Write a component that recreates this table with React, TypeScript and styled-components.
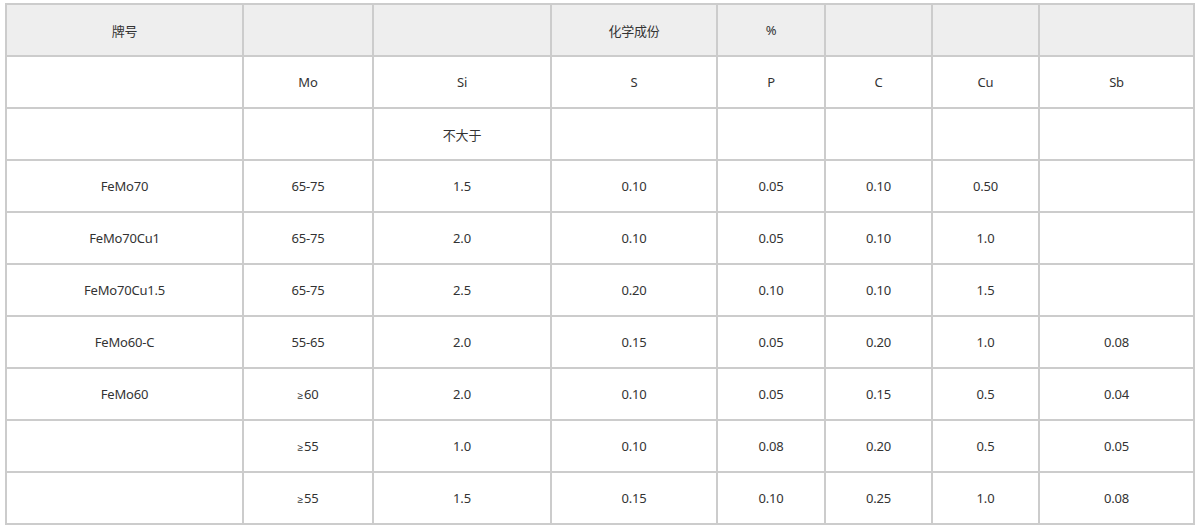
import styled, { createGlobalStyle } from 'styled-components'

const GlobalStyle = createGlobalStyle`
  body {
    margin: 0;
    background: #fff;
    font-family: "Noto Sans", "Liberation Sans", "Noto Sans CJK SC", sans-serif;
  }
`

const columns = [237, 130, 178, 166, 108, 107, 107, 155]

const rows: string[][] = [
  ['牌号', '', '', '化学成份', '%', '', '', ''],
  ['', 'Mo', 'Si', 'S', 'P', 'C', 'Cu', 'Sb'],
  ['', '', '不大于', '', '', '', '', ''],
  ['FeMo70', '65-75', '1.5', '0.10', '0.05', '0.10', '0.50', ''],
  ['FeMo70Cu1', '65-75', '2.0', '0.10', '0.05', '0.10', '1.0', ''],
  ['FeMo70Cu1.5', '65-75', '2.5', '0.20', '0.10', '0.10', '1.5', ''],
  ['FeMo60-C', '55-65', '2.0', '0.15', '0.05', '0.20', '1.0', '0.08'],
  ['FeMo60', '≥60', '2.0', '0.10', '0.05', '0.15', '0.5', '0.04'],
  ['', '≥55', '1.0', '0.10', '0.08', '0.20', '0.5', '0.05'],
  ['', '≥55', '1.5', '0.15', '0.10', '0.25', '1.0', '0.08'],
]

// the ≥ sign is drawn smaller than the digits in the original
const renderText = (text: string) =>
  text.startsWith('≥') ? (
    <>
      <Sign>≥</Sign>
      {text.slice(1)}
    </>
  ) : (
    text
  )

const App = () => {
  return (
    <Page>
      <GlobalStyle />
      <Table>
        {rows.map((row, r) =>
          row.map((text, c) => (
            <Cell key={`${r}-${c}`} $head={r === 0}>
              {renderText(text)}
            </Cell>
          ))
        )}
      </Table>
    </Page>
  )
}

export default App

const Page = styled.div`
  padding: 3px 5px;
`

const Table = styled.div`
  display: grid;
  grid-template-columns: ${columns.map((w) => `${w}px`).join(' ')};
  grid-auto-rows: 52px;
  width: max-content;
  border-right: 2px solid #cccccc;
  border-bottom: 2px solid #cccccc;
`

const Cell = styled.div<{ $head: boolean }>`
  box-sizing: border-box;
  display: flex;
  align-items: center;
  justify-content: center;
  border-left: 2px solid #cccccc;
  border-top: 2px solid #cccccc;
  background: ${({ $head }) => ($head ? '#eeeeee' : '#ffffff')};
  color: #333333;
  font-size: 13px;
  letter-spacing: -0.2px;
`

const Sign = styled.span`
  font-family: "Liberation Sans", sans-serif;
  font-size: 10px;
  margin-right: 1px;
  position: relative;
  top: 1px;
`
